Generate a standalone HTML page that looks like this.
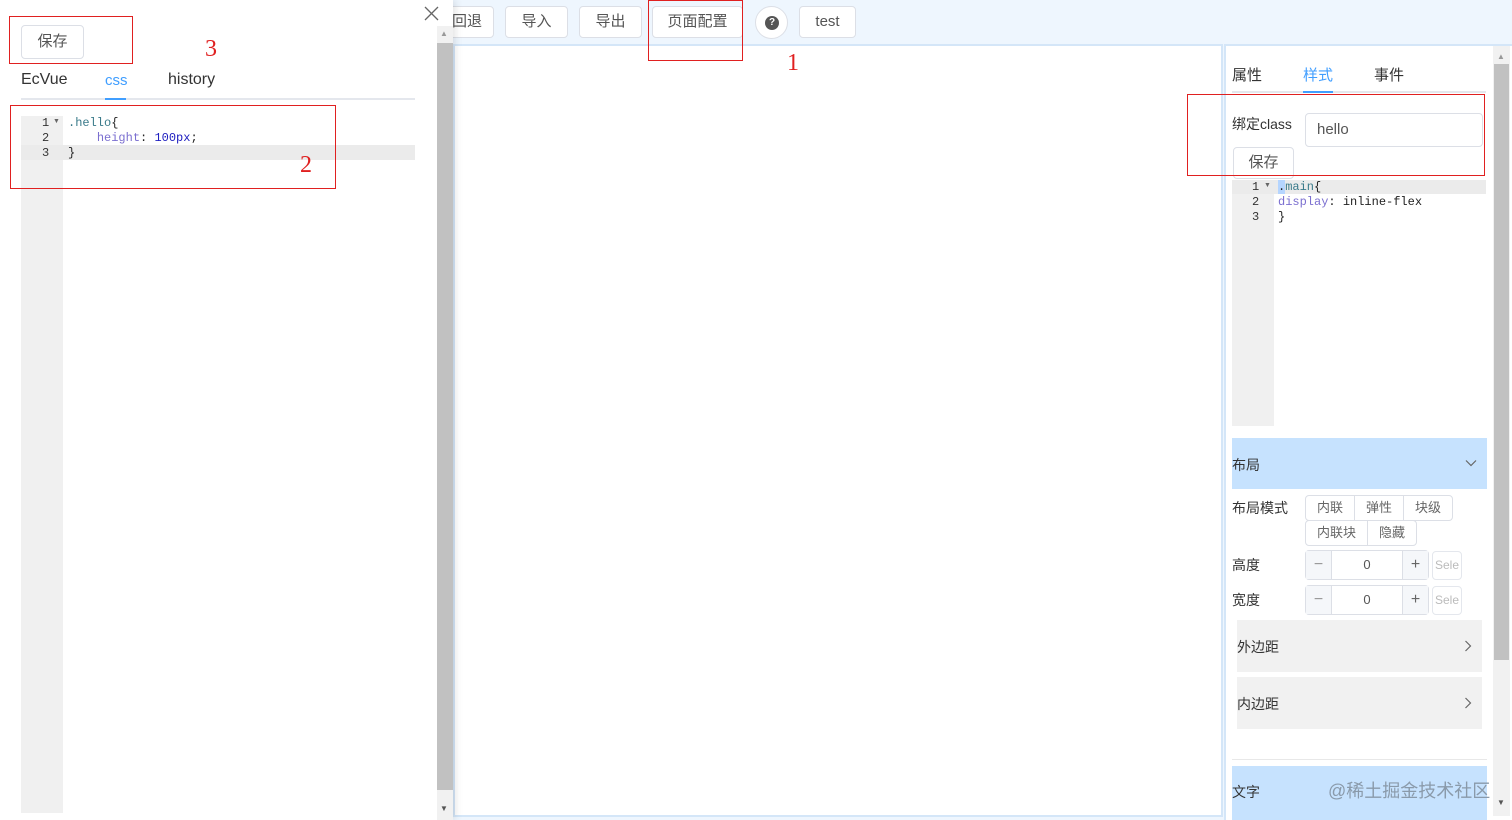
<!DOCTYPE html>
<html><head><meta charset="utf-8"><style>
*{margin:0;padding:0;box-sizing:border-box}
body{width:1512px;height:820px;overflow:hidden;background:#eef6fe;font-family:"Liberation Sans","Noto Sans CJK SC",sans-serif;position:relative;color:#333}
.a{position:absolute}
.btn{position:absolute;background:#fff;border:1px solid #dcdfe6;border-radius:4px;font-size:15px;color:#555;text-align:center}
.red{position:absolute;border:1px solid #e02020}
.rn{position:absolute;color:#e02020;font-family:"Liberation Serif",serif;font-size:24px}
.mono{font-family:"Liberation Mono",monospace;font-size:12px}
.seg{position:absolute;border:1px solid #dcdfe6;background:#fff;font-size:13px;color:#666;text-align:center;line-height:24px}
.num{position:absolute;border:1px solid #dcdfe6;border-radius:4px;background:#fff;height:30px;width:124px}
</style></head><body>
<!-- canvas -->
<div class="a" style="left:453px;top:44px;width:770px;height:773px;background:#fff;border:2px solid #d4e6f8"></div>
<!-- top buttons -->
<div class="btn" style="left:440px;top:6px;width:54px;height:32px;line-height:30px">回退</div>
<div class="btn" style="left:505px;top:6px;width:63px;height:32px;line-height:30px">导入</div>
<div class="btn" style="left:579px;top:6px;width:63px;height:32px;line-height:30px">导出</div>
<div class="btn" style="left:652px;top:6px;width:91px;height:32px;line-height:30px">页面配置</div>
<div class="btn" style="left:755px;top:6px;width:33px;height:33px;border-radius:50%"><span class="a" style="left:9px;top:9px;width:14px;height:14px;border-radius:50%;background:#555;color:#fff;font-size:10px;line-height:14px;font-weight:bold">?</span></div>
<div class="btn" style="left:799px;top:6px;width:57px;height:32px;line-height:30px">test</div>
<div class="red" style="left:648px;top:0;width:95px;height:61px"></div>
<div class="rn" style="left:787px;top:50px">1</div>
<!-- right panel -->
<div class="a" style="left:1224px;top:44px;width:288px;height:776px;background:#fff;border-left:2px solid #d4e6f8;border-top:2px solid #d4e6f8"></div>
<div class="a" style="left:1493px;top:46px;width:17px;height:770px;background:#f1f1f1"></div>
<div class="a" style="left:1494px;top:64px;width:15px;height:596px;background:#c1c1c1"></div>
<div class="a" style="left:1497px;top:52px;font-size:8px;color:#999">▲</div>
<div class="a" style="left:1497px;top:798px;font-size:8px;color:#555">▼</div>
<div class="a" style="left:1232px;top:64px;font-size:15px;color:#333">属性</div>
<div class="a" style="left:1303px;top:64px;font-size:15px;color:#409eff">样式</div>
<div class="a" style="left:1374px;top:64px;font-size:15px;color:#333">事件</div>
<div class="a" style="left:1232px;top:91px;width:254px;height:2px;background:#e4e7ed"></div>
<div class="a" style="left:1303px;top:91px;width:30px;height:2px;background:#409eff"></div>
<div class="a" style="left:1232px;top:114px;font-size:14px;color:#333">绑定class</div>
<div class="a" style="left:1305px;top:113px;width:178px;height:34px;border:1px solid #dcdfe6;border-radius:4px;font-size:15px;color:#555;padding:7px 11px">hello</div>
<div class="btn" style="left:1233px;top:147px;width:61px;height:32px;line-height:30px">保存</div>
<div class="red" style="left:1187px;top:94px;width:298px;height:82px"></div>
<div class="a" style="left:1232px;top:180px;width:42px;height:246px;background:#f0f0f0"></div>
<div class="a" style="left:1232px;top:180px;width:254px;height:14px;background:#ebebeb"></div>
<div class="a mono" style="left:1252px;top:180px;line-height:15px;color:#333">1<br>2<br>3</div>
<div class="a" style="left:1264px;top:182px;font-size:7px;color:#666">▼</div>
<div class="a mono" style="left:1278px;top:180px;line-height:15px;color:#222"><span style="background:#b5d5ff">.</span><span style="color:#3a7a8a">main</span>{<br><span style="color:#7b6fd0">display</span>: inline-flex<br>}</div>
<div class="a" style="left:1232px;top:438px;width:255px;height:51px;background:#c6e2fe"></div>
<div class="a" style="left:1232px;top:455px;font-size:14px">布局</div>
<svg class="a" style="left:1465px;top:459px" width="12" height="8"><path d="M1 1.5L6 6.5L11 1.5" fill="none" stroke="#666" stroke-width="1.2"/></svg>
<div class="a" style="left:1232px;top:498px;font-size:14px">布局模式</div>
<div class="seg" style="left:1305px;top:495px;width:50px;border-radius:4px 0 0 4px">内联</div>
<div class="seg" style="left:1354px;top:495px;width:50px">弹性</div>
<div class="seg" style="left:1403px;top:495px;width:50px;border-radius:0 4px 4px 0">块级</div>
<div class="seg" style="left:1305px;top:520px;width:63px;border-radius:4px 0 0 4px">内联块</div>
<div class="seg" style="left:1367px;top:520px;width:50px;border-radius:0 4px 4px 0">隐藏</div>
<div class="a" style="left:1232px;top:555px;font-size:14px">高度</div>
<div class="a" style="left:1232px;top:590px;font-size:14px">宽度</div>
<div class="num" style="left:1305px;top:550px"><div class="a" style="left:0;top:0;width:26px;height:28px;background:#f5f7fa;border-right:1px solid #dcdfe6;color:#999;text-align:center;line-height:28px">−</div><div class="a" style="left:0;width:122px;top:6px;text-align:center;font-size:13px;color:#555">0</div><div class="a" style="right:0;top:0;width:26px;height:28px;background:#f5f7fa;border-left:1px solid #dcdfe6;color:#666;text-align:center;line-height:28px">+</div></div>
<div class="num" style="left:1305px;top:585px"><div class="a" style="left:0;top:0;width:26px;height:28px;background:#f5f7fa;border-right:1px solid #dcdfe6;color:#999;text-align:center;line-height:28px">−</div><div class="a" style="left:0;width:122px;top:6px;text-align:center;font-size:13px;color:#555">0</div><div class="a" style="right:0;top:0;width:26px;height:28px;background:#f5f7fa;border-left:1px solid #dcdfe6;color:#666;text-align:center;line-height:28px">+</div></div>
<div class="a" style="left:1432px;top:551px;width:30px;height:29px;border:1px solid #e4e7ed;border-radius:4px;font-size:12px;color:#bbb;line-height:27px;overflow:hidden;padding-left:2px">Sele</div>
<div class="a" style="left:1432px;top:586px;width:30px;height:29px;border:1px solid #e4e7ed;border-radius:4px;font-size:12px;color:#bbb;line-height:27px;overflow:hidden;padding-left:2px">Sele</div>
<div class="a" style="left:1237px;top:620px;width:245px;height:52px;background:#f1f1f1"></div>
<div class="a" style="left:1237px;top:637px;font-size:14px">外边距</div>
<svg class="a" style="left:1464px;top:640px" width="8" height="12"><path d="M1.5 1L6.5 6L1.5 11" fill="none" stroke="#666" stroke-width="1.2"/></svg>
<div class="a" style="left:1237px;top:677px;width:245px;height:52px;background:#f1f1f1"></div>
<div class="a" style="left:1237px;top:694px;font-size:14px">内边距</div>
<svg class="a" style="left:1464px;top:697px" width="8" height="12"><path d="M1.5 1L6.5 6L1.5 11" fill="none" stroke="#666" stroke-width="1.2"/></svg>
<div class="a" style="left:1232px;top:759px;width:255px;height:1px;background:#e8e8e8"></div>
<div class="a" style="left:1232px;top:766px;width:255px;height:54px;background:#c6e2fe"></div>
<div class="a" style="left:1232px;top:782px;font-size:14px">文字</div>
<div class="a" style="left:1328px;top:777px;font-size:18px;color:#8a9aaa">@稀土掘金技术社区</div>
<!-- left drawer -->
<div class="a" style="left:0;top:0;width:453px;height:820px;background:#fff;box-shadow:2px 0 8px rgba(0,0,0,.12)"></div>
<div class="a" style="left:437px;top:26px;width:16px;height:794px;background:#f1f1f1"></div>
<div class="a" style="left:437px;top:43px;width:16px;height:747px;background:#c1c1c1"></div>
<div class="a" style="left:440px;top:29px;font-size:8px;color:#999">▲</div>
<div class="a" style="left:440px;top:804px;font-size:8px;color:#555">▼</div>
<svg class="a" style="left:424px;top:6px" width="15" height="15"><path d="M1 1L14 14M14 1L1 14" stroke="#666" stroke-width="1.3"/></svg>
<div class="btn" style="left:21px;top:25px;width:63px;height:34px;line-height:32px">保存</div>
<div class="red" style="left:9px;top:16px;width:124px;height:48px"></div>
<div class="rn" style="left:205px;top:36px">3</div>
<div class="a" style="left:21px;top:71px;font-size:16px">EcVue</div>
<div class="a" style="left:105px;top:72px;font-size:15px;color:#409eff">css</div>
<div class="a" style="left:168px;top:71px;font-size:16px">history</div>
<div class="a" style="left:21px;top:98px;width:394px;height:2px;background:#e4e7ed"></div>
<div class="a" style="left:105px;top:98px;width:21px;height:2px;background:#409eff"></div>
<div class="a" style="left:21px;top:116px;width:42px;height:697px;background:#f0f0f0"></div>
<div class="a" style="left:21px;top:145px;width:394px;height:15px;background:#ebebeb"></div>
<div class="a mono" style="left:42px;top:116px;line-height:15px;color:#333">1<br>2<br>3</div>
<div class="a" style="left:53px;top:118px;font-size:7px;color:#666">▼</div>
<div class="a mono" style="left:68px;top:116px;line-height:15px;color:#222"><span style="color:#3a7a8a">.hello</span>{<br>&nbsp;&nbsp;&nbsp;&nbsp;<span style="color:#7b6fd0">height</span>: <span style="color:#2020c0">100px</span>;<br>}</div>
<div class="red" style="left:10px;top:105px;width:326px;height:84px"></div>
<div class="rn" style="left:300px;top:152px">2</div>
</body></html>
